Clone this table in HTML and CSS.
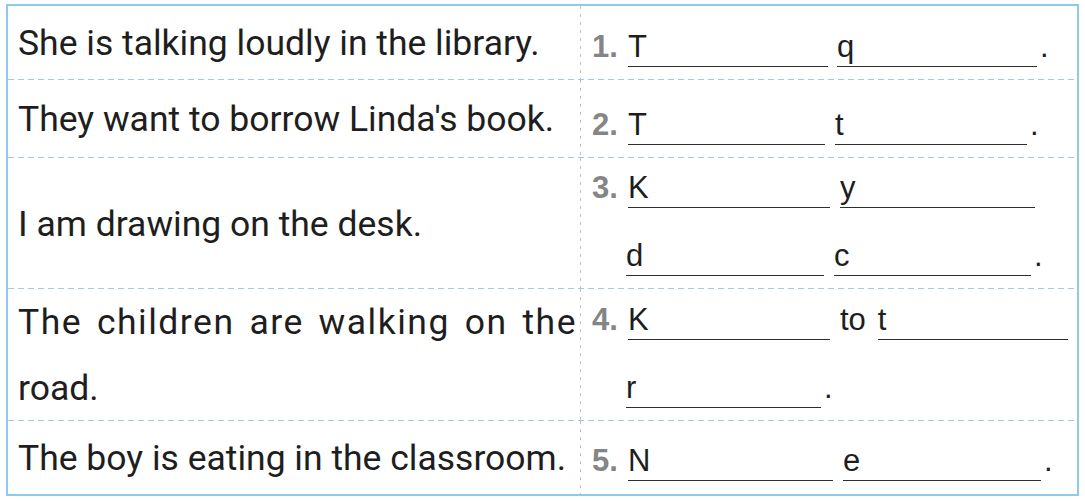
FILE: index.html
```html
<!DOCTYPE html>
<html>
<head>
<meta charset="utf-8">
<link rel="stylesheet" href="styles.css">
</head>
<body>
<div class="sheet">
  <div class="row r1">
    <div class="q">She is talking loudly in the library.</div>
    <div class="a">
      <div class="aline"><span class="num">1.</span><span class="blank w200">T</span><span class="blank w200 g9">q</span><span class="dot">.</span></div>
    </div>
  </div>
  <div class="row r2">
    <div class="q">They want to borrow Linda's book.</div>
    <div class="a">
      <div class="aline"><span class="num">2.</span><span class="blank w197">T</span><span class="blank w192 g10">t</span><span class="dot">.</span></div>
    </div>
  </div>
  <div class="row r3">
    <div class="q">I am drawing on the desk.</div>
    <div class="a">
      <div class="aline"><span class="num">3.</span><span class="blank w202">K</span><span class="blank w195 g10">y</span></div>
      <div class="aline"><span class="num"></span><span class="blank w198 back">d</span><span class="blank w197 g10">c</span><span class="dot">.</span></div>
    </div>
  </div>
  <div class="row r4">
    <div class="q"><span class="spread">The children are walking on the</span>road.</div>
    <div class="a">
      <div class="aline"><span class="num">4.</span><span class="blank w202">K</span><span class="word">to</span><span class="blank w190 g12">t</span></div>
      <div class="aline"><span class="num"></span><span class="blank w195 back">r</span><span class="dot">.</span></div>
    </div>
  </div>
  <div class="row r5">
    <div class="q">The boy is eating in the classroom.</div>
    <div class="a">
      <div class="aline"><span class="num">5.</span><span class="blank w205">N</span><span class="blank w198 g10">e</span><span class="dot">.</span></div>
    </div>
  </div>
</div>
</body>
</html>
```
FILE: styles.css
```css
html, body {
  margin: 0;
  padding: 0;
  background: #ffffff;
}
body {
  width: 1085px;
  height: 502px;
  overflow: hidden;
}
.sheet {
  box-sizing: border-box;
  margin: 4px 0 0 6px;
  width: 1073px;
  height: 492px;
  border: 2px solid #8ecbea;
  display: flex;
  flex-direction: column;
}
.row {
  box-sizing: border-box;
  display: grid;
  grid-template-columns: 573px 1fr;
  background: linear-gradient(to right, #a8c9d8 60%, transparent 0) left bottom / 10px 1px repeat-x;
}
.r1 { height: 74px; }
.r2 { height: 78px; }
.r3 { height: 131px; }
.r4 { height: 132px; }
.r5 { height: 73px; background: none; }

.q {
  box-sizing: border-box;
  display: flex;
  flex-direction: column;
  justify-content: center;
  padding: 0 0 0 10px;
  font-family: Roboto, "Liberation Sans", sans-serif;
  font-size: 35.5px;
  line-height: 66px;
  color: #1e1e1e;
  background: linear-gradient(to bottom, #b5c6cf 40%, transparent 0) right top / 1px 8px repeat-y;
}
.spread {
  display: block;
  text-align: justify;
  text-align-last: justify;
  letter-spacing: 1.5px;
  padding-right: 4px;
}

.a {
  box-sizing: border-box;
  display: flex;
  flex-direction: column;
  justify-content: flex-end;
  gap: 30px;
  padding: 0 0 13px 11px;
  font-family: "Liberation Sans", Arial, sans-serif;
  color: #1e1e1e;
}
.aline {
  display: flex;
  align-items: baseline;
}
.num {
  width: 36px;
  flex: none;
  font-size: 31px;
  font-weight: bold;
  color: #858585;
}
.blank {
  display: block;
  flex: none;
  font-size: 31px;
  line-height: 31px;
  padding-bottom: 4px;
  border-bottom: 1.5px solid #2e2e2e;
}
.back { margin-left: -2px; }
.w190 { width: 190px; }
.w192 { width: 192px; }
.w195 { width: 195px; }
.w197 { width: 197px; }
.w198 { width: 198px; }
.w200 { width: 200px; }
.w202 { width: 202px; }
.w205 { width: 205px; }
.g9 { margin-left: 9px; }
.g10 { margin-left: 10px; }
.g12 { margin-left: 12px; }
.word {
  font-size: 31px;
  margin-left: 10px;
}
.dot {
  font-size: 31px;
  margin-left: 3px;
}
```
